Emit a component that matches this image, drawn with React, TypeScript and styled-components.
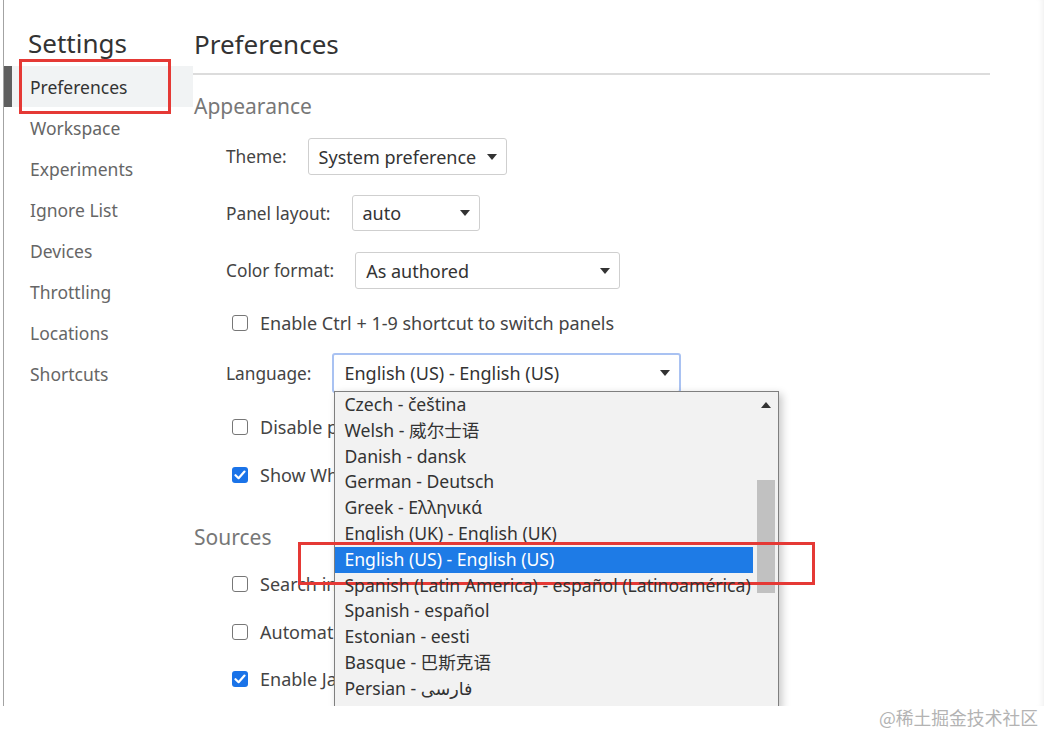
import React from "react"
import styled, { createGlobalStyle } from "styled-components"

const GlobalStyle = createGlobalStyle`
  html, body {
    margin: 0;
    padding: 0;
    background: #fff;
  }
  body {
    font-family: "Noto Sans", "Noto Sans CJK SC", "DejaVu Sans", sans-serif;
    color: #333;
  }
  * {
    box-sizing: border-box;
  }
`

const Page = styled.div`
  width: 1044px;
  height: 731px;
  display: flex;
  flex-direction: column;
  overflow: hidden;
`

const Frame = styled.div`
  height: 706px;
  margin-left: 3px;
  border-left: 1px solid #a3a3a3;
  display: flex;
  position: relative;
  overflow: hidden;
  box-shadow: inset -6px 0 6px -5px rgba(0, 0, 0, 0.08);
`

const Sidebar = styled.nav`
  width: 189px;
  flex-shrink: 0;
  display: flex;
  flex-direction: column;
`

const SideTitle = styled.h1`
  margin: 0;
  height: 66px;
  padding: 25px 0 0 24px;
  font-size: 26px;
  font-weight: 400;
  line-height: 36px;
  color: #333;
`

const NavItem = styled.div<{ $active?: boolean }>`
  position: relative;
  height: 41px;
  display: flex;
  align-items: center;
  font-size: 17.5px;
  padding-left: ${p => (p.$active ? "18px" : "26px")};
  color: ${p => (p.$active ? "#333" : "#666")};
  background: ${p => (p.$active ? "#f1f3f4" : "transparent")};
  border-left: ${p => (p.$active ? "8px solid #5f5f5f" : "none")};
`

const Mark = styled.div`
  position: absolute;
  border: 3px solid #e53935;
  pointer-events: none;
`

const SideMark = styled(Mark)`
  left: 7px;
  top: -7px;
  width: 152px;
  height: 55px;
`

const Main = styled.main`
  flex: 1;
  display: flex;
  flex-direction: column;
  margin-right: 54px;
`

const Heading = styled.h2`
  margin: 0;
  height: 75px;
  padding: 26px 0 0 1px;
  font-size: 26px;
  font-weight: 400;
  line-height: 36px;
  color: #333;
  border-bottom: 2px solid #dcdcdc;
`

const SectionTitle = styled.h3<{ $top: number }>`
  margin: ${p => p.$top}px 0 0;
  padding-left: 1px;
  font-size: 21px;
  font-weight: 400;
  line-height: 30px;
  color: #777;
`

const Row = styled.div<{ $top: number; $h: number; $check?: boolean }>`
  margin-top: ${p => p.$top}px;
  height: ${p => p.$h}px;
  display: flex;
  align-items: center;
  padding-left: ${p => (p.$check ? "39px" : "33px")};
  font-size: 18px;
  color: #444;
  white-space: nowrap;
`

const Label = styled.span`
  font-size: 17.3px;
  margin-right: 21px;
`

const Select = styled.div<{ $w: number; $focus?: boolean }>`
  position: relative;
  width: ${p => p.$w}px;
  height: 100%;
  display: flex;
  align-items: center;
  justify-content: space-between;
  padding: 0 9px 0 10px;
  border: ${p => (p.$focus ? "2px solid #a9c2f2" : "1px solid #cfcfcf")};
  border-radius: 3px;
  background: #fff;
  color: #333;
  font-size: 18px;
`

const Caret = ({ up }: { up?: boolean }) => (
  <svg width="10" height="6" viewBox="0 0 10 6">
    <path d={up ? "M0 6 L5 0 L10 6 Z" : "M0 0 L10 0 L5 6 Z"} fill="#333" />
  </svg>
)

const Box = styled.span<{ $on?: boolean }>`
  width: 16px;
  height: 16px;
  border-radius: 3px;
  margin-right: 12px;
  flex-shrink: 0;
  display: flex;
  align-items: center;
  justify-content: center;
  border: ${p => (p.$on ? "none" : "1.5px solid #777")};
  background: ${p => (p.$on ? "#1a73e8" : "#fff")};
`

const Check = ({ on }: { on?: boolean }) => (
  <Box $on={on}>
    {on && (
      <svg width="12" height="10" viewBox="0 0 12 10">
        <path d="M1.5 5.2 L4.6 8.2 L10.5 1.6" fill="none" stroke="#fff" strokeWidth="2.2" strokeLinecap="round" strokeLinejoin="round" />
      </svg>
    )}
  </Box>
)

const Dropdown = styled.div`
  position: absolute;
  top: 100%;
  left: 0;
  width: 445px;
  height: 318px;
  display: flex;
  background: #f2f2f2;
  border: 1px solid #7f7f7f;
  box-shadow: 3px 3px 8px rgba(0, 0, 0, 0.22);
  z-index: 10;
`

const Options = styled.div`
  width: 418px;
  display: flex;
  flex-direction: column;
`

const Option = styled.div<{ $sel?: boolean }>`
  position: relative;
  height: 25.8px;
  line-height: 25.8px;
  padding-left: 9px;
  font-size: 17.6px;
  white-space: nowrap;
  color: ${p => (p.$sel ? "#fff" : "#333")};
  background: ${p => (p.$sel ? "#1e7be6" : "transparent")};
`

const OptionMark = styled(Mark)`
  left: -37px;
  top: -5px;
  width: 517px;
  height: 43px;
`

const ScrollTrack = styled.div`
  flex: 1;
  display: flex;
  flex-direction: column;
  align-items: center;
  padding-top: 10px;
`

const Thumb = styled.div`
  margin-top: 72px;
  width: 18px;
  height: 113px;
  background: #c1c1c1;
`

const Footer = styled.div`
  flex: 1;
  display: flex;
  justify-content: flex-end;
  padding: 1px 6px 0 0;
  font-family: "Noto Sans CJK SC", sans-serif;
  font-size: 17.8px;
  line-height: 20px;
  color: #b3b3b3;
`

const navItems = ["Preferences", "Workspace", "Experiments", "Ignore List", "Devices", "Throttling", "Locations", "Shortcuts"]

const languages = [
  "Czech - čeština",
  "Welsh - 威尔士语",
  "Danish - dansk",
  "German - Deutsch",
  "Greek - Ελληνικά",
  "English (UK) - English (UK)",
  "English (US) - English (US)",
  "Spanish (Latin America) - español (Latinoamérica)",
  "Spanish - español",
  "Estonian - eesti",
  "Basque - 巴斯克语",
  "Persian - فارسی",
]

export default function App() {
  return (
    <Page>
      <GlobalStyle />
      <Frame>
        <Sidebar>
          <SideTitle>Settings</SideTitle>
          {navItems.map((n, i) => (
            <NavItem key={n} $active={i === 0}>
              {n}
              {i === 0 && <SideMark />}
            </NavItem>
          ))}
        </Sidebar>
        <Main>
          <Heading>Preferences</Heading>
          <SectionTitle $top={16}>Appearance</SectionTitle>
          <Row $top={17} $h={37}>
            <Label>Theme:</Label>
            <Select $w={199}>System preference<Caret /></Select>
          </Row>
          <Row $top={20} $h={36}>
            <Label>Panel layout:</Label>
            <Select $w={128}>auto<Caret /></Select>
          </Row>
          <Row $top={21} $h={37}>
            <Label>Color format:</Label>
            <Select $w={265}>As authored<Caret /></Select>
          </Row>
          <Row $top={22} $h={24} $check>
            <Check />Enable Ctrl + 1-9 shortcut to switch panels
          </Row>
          <Row $top={18} $h={40}>
            <Label>Language:</Label>
            <Select $w={349} $focus>
              English (US) - English (US)<Caret />
              <Dropdown>
                <Options>
                  {languages.map((l, i) => (
                    <Option key={l} $sel={i === 6}>
                      {l}
                      {i === 6 && <OptionMark />}
                    </Option>
                  ))}
                </Options>
                <ScrollTrack>
                  <Caret up />
                  <Thumb />
                </ScrollTrack>
              </Dropdown>
            </Select>
          </Row>
          <Row $top={22} $h={24} $check>
            <Check />Disable paused state overlay
          </Row>
          <Row $top={24} $h={24} $check>
            <Check on />Show What's New after each update
          </Row>
          <SectionTitle $top={35}>Sources</SectionTitle>
          <Row $top={20} $h={24} $check>
            <Check />Search in anonymous and content scripts
          </Row>
          <Row $top={24} $h={24} $check>
            <Check />Automatically reveal files in sidebar
          </Row>
          <Row $top={23} $h={24} $check>
            <Check on />Enable JavaScript source maps
          </Row>
        </Main>
      </Frame>
      <Footer>@稀土掘金技术社区</Footer>
    </Page>
  )
}
